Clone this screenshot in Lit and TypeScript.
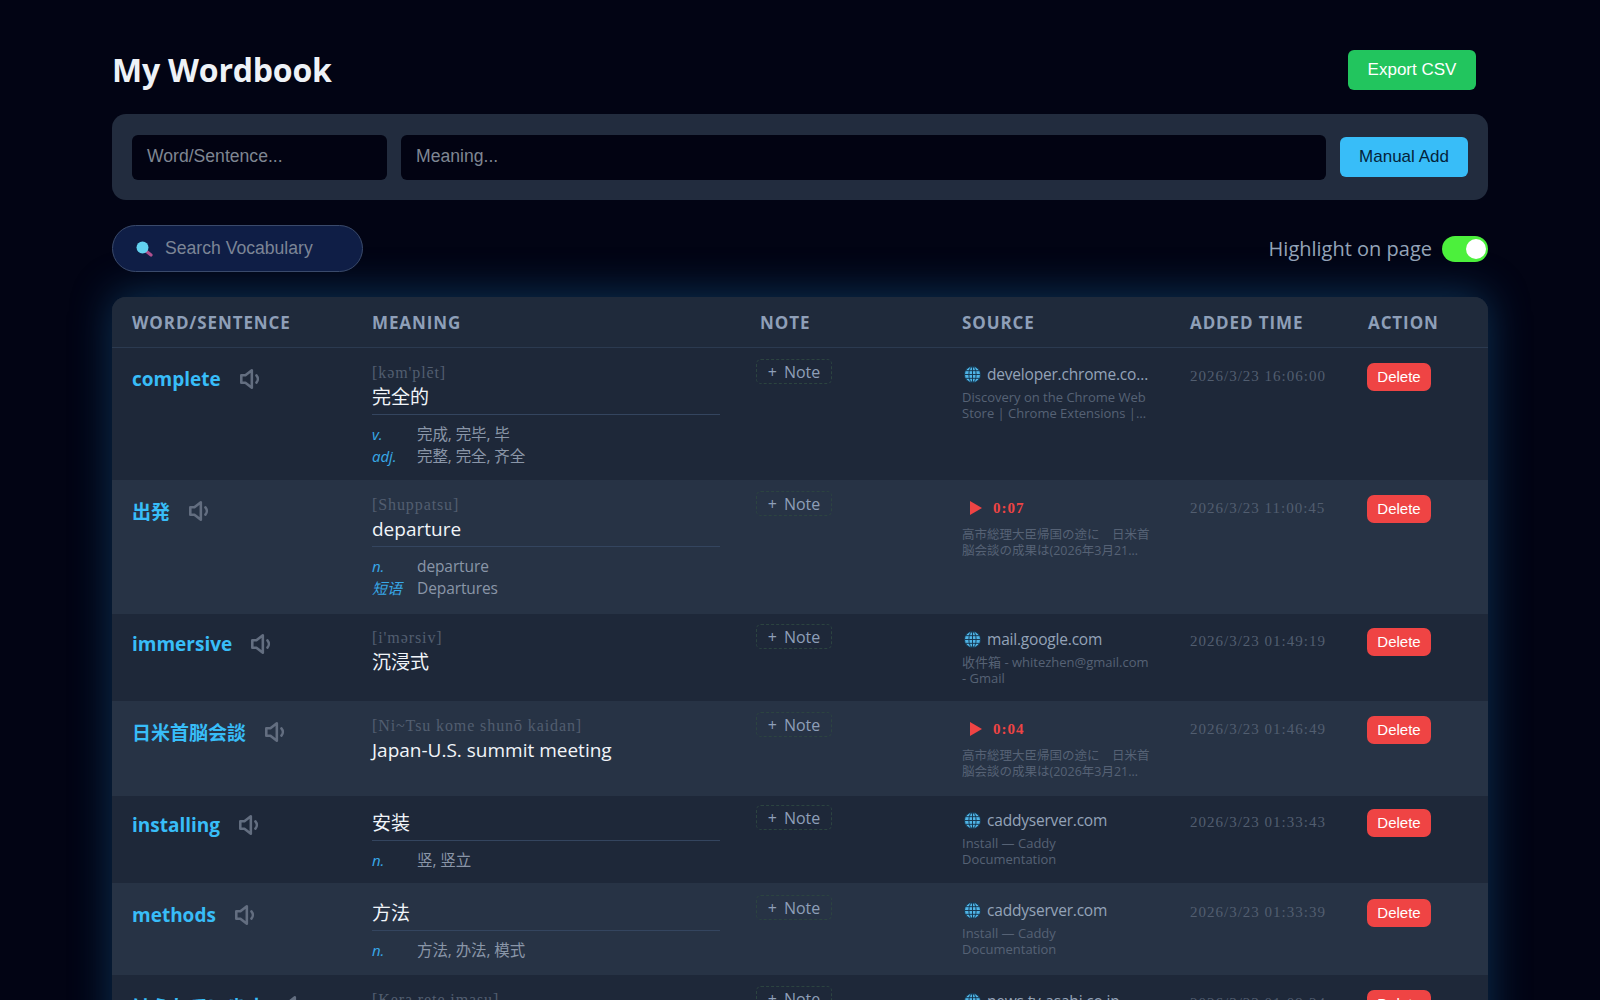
import { LitElement, html, css, svg } from 'lit';
import { customElement } from 'lit/decorators.js';

interface Def { pos: string; text: string; }
interface Entry {
  word: string;
  phonetic?: string;
  meaning: string;
  defs?: Def[];
  site?: string;
  time?: string;
  title: string;
  added: string;
  height: number;
  pad: number;
}

const chromeTitle = 'Discovery on the Chrome Web Store\u00a0|\u00a0Chrome Extensions\u00a0|…';
const newsTitle = '高市総理大臣帰国の途に　日米首脳会談の成果は(2026年3月21日放送分より抜粋)';

const entries: Entry[] = [
  {
    word: 'complete', phonetic: "[kəm'plēt]", meaning: '完全的',
    defs: [{ pos: 'v.', text: '完成, 完毕, 毕' }, { pos: 'adj.', text: '完整, 完全, 齐全' }],
    site: 'developer.chrome.com/docs/webstore', title: chromeTitle,
    added: '2026/3/23 16:06:00', height: 132, pad: 14,
  },
  {
    word: '出発', phonetic: '[Shuppatsu]', meaning: 'departure',
    defs: [{ pos: 'n.', text: 'departure' }, { pos: '短语', text: 'Departures' }],
    time: '0:07', title: newsTitle,
    added: '2026/3/23 11:00:45', height: 134, pad: 14,
  },
  {
    word: 'immersive', phonetic: "[i'mərsiv]", meaning: '沉浸式',
    site: 'mail.google.com', title: '收件箱 - whitezhen@gmail.com - Gmail',
    added: '2026/3/23 01:49:19', height: 87, pad: 13,
  },
  {
    word: '日米首脳会談', phonetic: '[Ni~Tsu kome shunō kaidan]', meaning: 'Japan-U.S. summit meeting',
    time: '0:04', title: newsTitle,
    added: '2026/3/23 01:46:49', height: 95, pad: 14,
  },
  {
    word: 'installing', meaning: '安装', defs: [{ pos: 'n.', text: '竖, 竖立' }],
    site: 'caddyserver.com', title: 'Install — Caddy Documentation',
    added: '2026/3/23 01:33:43', height: 87, pad: 12,
  },
  {
    word: 'methods', meaning: '方法', defs: [{ pos: 'n.', text: '方法, 办法, 模式' }],
    site: 'caddyserver.com', title: 'Install — Caddy Documentation',
    added: '2026/3/23 01:33:39', height: 92, pad: 15,
  },
  {
    word: 'けられています', phonetic: '[Kera rete imasu]', meaning: '被踢了',
    site: 'news.tv-asahi.co.jp', title: 'テレビ朝日ニュース',
    added: '2026/3/23 01:09:24', height: 90, pad: 14,
  },
];

const speaker = svg`<path d="M2.5 8h4.5l7-5.5v19l-7-5.5H2.5z" fill="none" stroke="currentColor" stroke-width="2.8" stroke-linejoin="round"/><path d="M19 8a6 6 0 0 1 0 8" fill="none" stroke="currentColor" stroke-width="2.8" stroke-linecap="round"/>`;

const globe = svg`<circle cx="8" cy="8" r="7.6" fill="#4fb4e6"/><g fill="none" stroke="#16364f" stroke-width=".9"><circle cx="8" cy="8" r="7.6"/><ellipse cx="8" cy="8" rx="3.4" ry="7.6"/><path d="M8 .4v15.2M.4 8h15.2M1.6 4.4h12.8M1.6 11.6h12.8"/></g>`;

@customElement('app-root')
export class AppRoot extends LitElement {
  static styles = css`
    :host {
      display: block;
      height: 1000px;
      overflow: hidden;
      background: #020414;
      color: #e2e8f0;
      font-family: "Open Sans", "Noto Sans CJK SC", sans-serif;
    }
    .page {
      padding: 50px 112px 0;
    }
    .head {
      display: flex;
      justify-content: space-between;
      align-items: flex-start;
      height: 64px;
    }
    h1 {
      margin: 0;
      font-family: "Open Sans", sans-serif;
      font-size: 32px;
      line-height: 40px;
      font-weight: 700;
      letter-spacing: -0.2px;
      color: #eef2f7;
    }
    button {
      font-family: "Liberation Sans", sans-serif;
      border: none;
      padding: 0;
    }
    .export {
      width: 128px;
      height: 40px;
      margin-right: 12px;
      border-radius: 6px;
      background: #22c55e;
      color: #fff;
      font-size: 17px;
    }
    .panel {
      display: flex;
      align-items: center;
      height: 86px;
      padding: 0 20px;
      gap: 14px;
      box-sizing: border-box;
      background: #222c3e;
      border-radius: 14px;
    }
    .field {
      height: 45px;
      box-sizing: border-box;
      padding: 0 15px 1px;
      display: flex;
      align-items: center;
      border-radius: 6px;
      background: #020312;
      color: #7f8692;
      font-family: "Liberation Sans", sans-serif;
      font-size: 17.6px;
    }
    .field.wordbox { width: 255px; }
    .field.mean { flex: 1; }
    .manual {
      width: 128px;
      height: 40px;
      border-radius: 6px;
      background: #38bdf8;
      color: #04233a;
      font-size: 17px;
    }
    .tools {
      display: flex;
      justify-content: space-between;
      align-items: center;
      margin-top: 25px;
      height: 47px;
    }
    .search {
      width: 251px;
      height: 47px;
      box-sizing: border-box;
      padding-left: 22px;
      display: flex;
      align-items: center;
      gap: 12px;
      border-radius: 24px;
      border: 1px solid #3a4a6b;
      background: #0f1e46;
      color: #7c8596;
      font-family: "Liberation Sans", sans-serif;
      font-size: 17.6px;
    }
    .search svg { width: 18px; height: 18px; }
    .hl {
      display: flex;
      align-items: center;
      gap: 10px;
      font-size: 20px;
      color: #94a3b8;
    }
    .switch {
      position: relative;
      width: 46px;
      height: 26px;
      border-radius: 13px;
      background: #4cf03c;
    }
    .switch::after {
      content: '';
      position: absolute;
      right: 2px;
      top: 3px;
      width: 20px;
      height: 20px;
      border-radius: 50%;
      background: #fff;
    }
    .table {
      margin-top: 25px;
      border-radius: 14px 14px 0 0;
      box-shadow: 0 -4px 42px rgba(26, 110, 170, 0.42);
      background: #1e2839;
    }
    .row {
      display: grid;
      grid-template-columns: 240px 388px 202px 228px 178px 140px;
      box-sizing: border-box;
    }
    .row > div {
      padding: 0 20px;
      min-width: 0;
    }
    .row.top {
      height: 51px;
      align-items: center;
      border-radius: 14px 14px 0 0;
      border-bottom: 1px solid #2b3a50;
      background: #1f2a3b;
      font-size: 17px;
      font-weight: 700;
      letter-spacing: 0.9px;
      color: #8e9fb8;
    }
    .row.item { background: #1e2839; }
    .row.item.alt { background: #273345; }
    .row.item > div { padding-top: var(--pad); }
    .word {
      display: flex;
      align-items: center;
      gap: 18px;
      height: 32px;
      margin-top: 1px;
      font-size: 19px;
      font-weight: 700;
      color: #38bdf8;
      white-space: nowrap;
    }
    .word svg {
      flex: none;
      width: 22px;
      height: 22px;
      color: #636e80;
    }
    .phonetic {
      font-family: "Liberation Serif", serif;
      font-size: 16px;
      line-height: 20px;
      letter-spacing: 0.9px;
      margin: 1px 0 0;
      color: #525e70;
      white-space: nowrap;
    }
    .meaning {
      font-size: 19px;
      line-height: 28px;
      margin-top: 1px;
      color: #f1f5f9;
    }
    .phonetic + .meaning { margin-top: 0; }
    .meaning.ruled {
      border-bottom: 1px solid #34455f;
      padding-bottom: 3px;
      margin-bottom: 7.5px;
    }
    .def {
      display: flex;
      font-size: 15.5px;
      line-height: 22px;
      letter-spacing: -0.1px;
      color: #8a96a8;
    }
    .def i {
      width: 45px;
      flex: none;
      font-size: 15px;
      color: #38a8e8;
    }
    .note-cell { margin-left: -4px; }
    .note {
      display: flex;
      align-items: center;
      justify-content: center;
      gap: 7px;
      width: 76px;
      height: 25px;
      margin-top: -3px;
      box-sizing: border-box;
      border: 1px dashed #2c4440;
      border-radius: 5px;
      color: #8e9fb8;
      font-size: 16px;
    }
    .src {
      display: flex;
      align-items: center;
      height: 20px;
      margin-top: 2px;
      gap: 6px;
      font-size: 15.5px;
      letter-spacing: -0.2px;
      color: #94a3b8;
      white-space: nowrap;
    }
    .src svg { flex: none; width: 17px; height: 17px; margin-left: 2px; }
    .src span {
      overflow: hidden;
      text-overflow: ellipsis;
    }
    .src.clip {
      font-family: "Liberation Serif", serif;
      font-weight: 700;
      font-size: 15px;
      letter-spacing: 1px;
      color: #ef4444;
      gap: 10px;
      margin-top: 4px;
    }
    .src.clip svg { width: 14px; height: 16px; margin-left: 7px; }
    .title {
      margin-top: 4.5px;
      font-size: 13px;
      line-height: 16px;
      color: #566275;
      display: -webkit-box;
      -webkit-line-clamp: 2;
      -webkit-box-orient: vertical;
      overflow: hidden;
    }
    .src.clip + .title {
      margin-top: 9px;
      font-size: 12.5px;
    }
    .added {
      font-family: "Liberation Serif", serif;
      font-size: 15px;
      line-height: 20px;
      letter-spacing: 1px;
      margin-top: 4px;
      color: #525e70;
      white-space: nowrap;
    }
    .del {
      display: block;
      width: 64px;
      height: 28px;
      margin-top: 0.5px;
      margin-left: -1px;
      border-radius: 7px;
      background: #ef4444;
      color: #fff;
      font-size: 15px;
    }
  `;

  renderRow(e: Entry, i: number) {
    return html`
      <div class="row item ${i % 2 ? 'alt' : ''}" style="height: ${e.height}px; --pad: ${e.pad}px">
        <div>
          <div class="word">${e.word}<svg viewBox="0 0 24 24">${speaker}</svg></div>
        </div>
        <div>
          ${e.phonetic ? html`<div class="phonetic">${e.phonetic}</div>` : ''}
          <div class="meaning ${e.defs ? 'ruled' : ''}">${e.meaning}</div>
          ${(e.defs || []).map(d => html`<div class="def"><i>${d.pos}</i><span>${d.text}</span></div>`)}
        </div>
        <div class="note-cell"><div class="note"><span>+</span><span>Note</span></div></div>
        <div>
          ${e.time
            ? html`<div class="src clip"><svg viewBox="0 0 14 16"><path d="M1 1l12 7-12 7z" fill="currentColor"/></svg><span>${e.time}</span></div>`
            : html`<div class="src"><svg viewBox="0 0 16 16">${globe}</svg><span>${e.site}</span></div>`}
          <div class="title">${e.title}</div>
        </div>
        <div><div class="added">${e.added}</div></div>
        <div><button class="del">Delete</button></div>
      </div>
    `;
  }

  render() {
    return html`
      <div class="page">
        <div class="head">
          <h1>My Wordbook</h1>
          <button class="export">Export CSV</button>
        </div>
        <div class="panel">
          <div class="field wordbox">Word/Sentence...</div>
          <div class="field mean">Meaning...</div>
          <button class="manual">Manual Add</button>
        </div>
        <div class="tools">
          <div class="search">
            <svg viewBox="0 0 18 18">
              <path d="M11 11l5 4" stroke="#b0508e" stroke-width="3.2" stroke-linecap="round"/>
              <circle cx="7.5" cy="7.5" r="6" fill="#62d2f0"/>
            </svg>
            <span>Search Vocabulary</span>
          </div>
          <div class="hl"><span>Highlight on page</span><div class="switch"></div></div>
        </div>
        <div class="table">
          <div class="row top">
            <div>WORD/SENTENCE</div><div>MEANING</div><div>NOTE</div>
            <div>SOURCE</div><div>ADDED TIME</div><div>ACTION</div>
          </div>
          ${entries.map((e, i) => this.renderRow(e, i))}
        </div>
      </div>
    `;
  }
}
